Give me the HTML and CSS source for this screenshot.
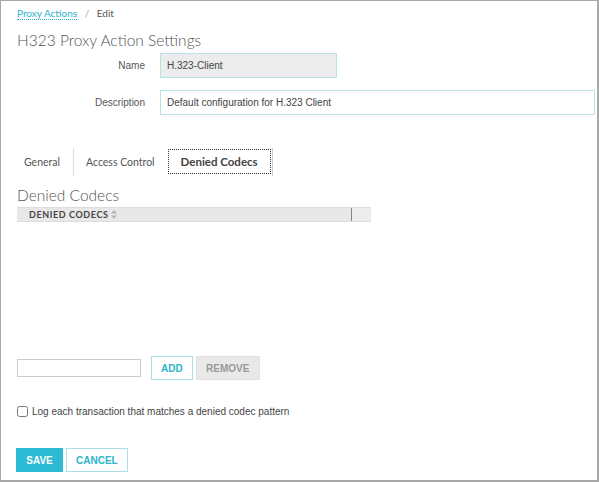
FILE: index.html
```html
<!DOCTYPE html>
<html>
<head>
<title>H323 Proxy Action Settings</title>
<meta charset="UTF-8">
<meta name="viewport" content="width=device-width, initial-scale=1.0">
<link rel="stylesheet" href="styles.css">
</head>
<body>

<div class="frame">
  <div class="crumbs">
    <a href="#" class="crumb">Proxy Actions</a>
    <span class="sep">/</span>
    <span class="here">Edit</span>
  </div>

  <h1 class="title">H323 Proxy Action Settings</h1>

  <div class="row">
    <label class="label">Name</label>
    <input class="field name" type="text" value="H.323-Client" readonly>
  </div>
  <div class="row">
    <label class="label">Description</label>
    <input class="field desc" type="text" value="Default configuration for H.323 Client">
  </div>

  <div class="tabs">
    <div class="tab">General</div>
    <div class="tab">Access Control</div>
    <div class="tab active"><span>Denied Codecs</span></div>
  </div>

  <h2 class="heading">Denied Codecs</h2>

  <div class="grid">
    <div class="grid-head">
      <div class="col main">DENIED CODECS
        <svg class="sort" width="6" height="9" viewBox="0 0 6 9"><path d="M3 0L6 3.5H0z M3 9L0 5.5H6z" fill="#b5b5b5"/></svg>
      </div>
      <div class="col rest"></div>
    </div>
    <div class="grid-body"></div>
  </div>

  <div class="add-row">
    <input class="codec" type="text">
    <button class="btn outline">ADD</button>
    <button class="btn off">REMOVE</button>
  </div>

  <div class="check-row">
    <input type="checkbox" class="check" id="log">
    <label for="log">Log each transaction that matches a denied codec pattern</label>
  </div>

  <div class="actions">
    <button class="btn solid">SAVE</button>
    <button class="btn outline">CANCEL</button>
  </div>
</div>

</body>
</html>
```

FILE: styles.css
```css
* {
  box-sizing: border-box;
}
html, body {
  margin: 0;
  padding: 0;
  background: #fff;
}
body {
  font-family: "Liberation Sans", Arial, sans-serif;
  font-size: 10px;
  color: #444;
}
.frame {
  width: 599px;
  height: 482px;
  border: 1px solid #a8a8a8;
  border-right-width: 2px;
  border-bottom-width: 2px;
  padding: 0 2px 0 16px;
}
.crumbs {
  font-family: "Lato", sans-serif;
  font-size: 10px;
  height: 14px;
  line-height: 14px;
  margin-top: 5px;
  color: #555;
}
.crumb {
  color: #2eb3cc;
  text-decoration: none;
  border-bottom: 1px dotted #2eb3cc;
}
.sep {
  color: #aaa;
  margin: 0 5px;
}
.title, .heading {
  font-family: "Lato", sans-serif;
  font-weight: 300;
  font-size: 15.5px;
  color: #555;
  margin: 0;
  line-height: 18px;
}
.title {
  margin-top: 11px;
}
.row {
  display: flex;
  align-items: center;
  gap: 15px;
  margin-top: 4px;
}
.row + .row {
  margin-top: 12px;
}
.label {
  width: 128px;
  flex: none;
  text-align: right;
  color: #555;
}
.field {
  flex: none;
  height: 25px;
  border: 1px solid #b9e1e8;
  padding: 0 6px;
  font-family: "Liberation Sans", Arial, sans-serif;
  font-size: 10px;
  color: #444;
  outline: 0;
}
.field.name {
  width: 177px;
  background: #ececec;
}
.field.desc {
  width: 435px;
  background: #fff;
}
.tabs {
  display: flex;
  align-items: center;
  margin-top: 33px;
  height: 28px;
  font-family: "Lato", sans-serif;
  font-size: 10.5px;
  color: #555;
}
.tab {
  height: 28px;
  line-height: 28px;
  padding: 0 13px 0 7px;
}
.tab + .tab {
  border-left: 1px solid #ddd;
  padding: 0 13px 0 12px;
}
.tab.active {
  padding: 1px 1px 2px 0;
  height: 28px;
  line-height: 23px;
  border-left: 0;
  border-right: 1px solid #ccc;
}
.tab.active span {
  display: block;
  height: 25px;
  padding: 0 12px;
  border: 1px dotted #333;
  font-weight: bold;
  font-size: 11.5px;
  color: #444;
}
.heading {
  margin-top: 10px;
}
.grid {
  width: 354px;
  margin-top: 3px;
}
.grid-head {
  display: flex;
  height: 15px;
  background: #e8e8e8;
  border-top: 1px solid #ddd;
  border-bottom: 1px solid #ddd;
}
.col.main {
  width: 335px;
  border-right: 1px solid #888;
  padding-left: 12px;
  font-family: "Lato", sans-serif;
  font-weight: bold;
  font-size: 9px;
  letter-spacing: 0.6px;
  color: #444;
  display: flex;
  align-items: center;
  gap: 3px;
}
.col.rest {
  flex: 1;
  background: #ececec;
}
.sort {
  display: block;
}
.grid-body {
  height: 134px;
}
.add-row {
  display: flex;
  align-items: center;
  gap: 3px;
}
.codec {
  width: 124px;
  height: 18px;
  border: 1px solid #ccc;
  margin-right: 7px;
  outline: 0;
}
.btn {
  height: 24px;
  padding: 0 9px;
  font-family: "Liberation Sans", Arial, sans-serif;
  font-weight: bold;
  font-size: 10px;
  border: 1px solid #a9dde7;
  background: #fff;
  color: #2eb3cc;
  cursor: pointer;
}
.btn.off {
  background: #e9e9e9;
  border-color: #e0e0e0;
  color: #999;
  width: 64px;
}
.btn.solid {
  background: #2dbad4;
  border-color: #2dbad4;
  color: #fff;
  width: 47px;
}
.check-row {
  display: flex;
  align-items: center;
  gap: 4px;
  margin-top: 26px;
  color: #444;
}
.check {
  width: 11px;
  height: 11px;
  margin: 0;
}
.actions {
  display: flex;
  gap: 3px;
  margin-top: 31px;
  margin-left: -1px;
}
```
